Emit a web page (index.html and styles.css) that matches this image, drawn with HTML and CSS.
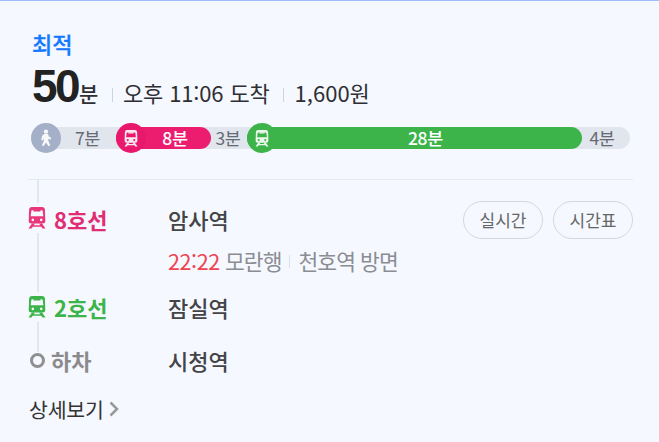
FILE: index.html
```
<!DOCTYPE html>
<html lang="ko">
<head>
<meta charset="utf-8">
<title>길찾기</title>
<link rel="stylesheet" href="styles.css">
</head>
<body>
<svg width="0" height="0" class="defs">
  <symbol id="train" viewBox="0 0 18 22">
    <path fill-rule="evenodd" d="M4 0h10q2.700 0 2.900 2.500L17.300 14q0 2.500-2.800 2.500h-11Q.7 16.500.7 14l.4-11.500Q1.300 0 4 0zM4.300 3.300q-.9 0-1 .8L2.700 9.300h12.600l-.6-5.200q-.1-.8-1-.8zM4.800 11.600a1.300 1.300 0 1 0 .01 0zM13.200 11.600a1.300 1.300 0 1 0 .01 0z"/>
    <path d="M5.500 3h7v1.600h-7zM4 16.500h3L3.500 21.500H.5zM11 16.500h3l3.500 5h-3zM3.500 18.200h11v1.500h-11z"/>
  </symbol>
</svg>
<main class="route">
  <div class="tag">최적</div>
  <div class="summary">
    <strong class="total">50</strong><span class="unit">분</span>
    <i class="sep"></i><span class="arrive">오후 11:06 도착</span>
    <i class="sep"></i><span class="fare">1,600원</span>
  </div>
  <div class="bar">
    <div class="seg walk first"><span class="dot"><svg width="12" height="18" viewBox="0 0 12 18"><circle cx="6" cy="2.600" r="2.200"/><path d="M4 5h4l1 2.500 2.300 1.500-.6 1.500-2.200-.8-.2 2 2 4.600-1.800.9L6 13.500l-2.500 3.700-1.700-1L3.800 12V9.300L3 11.200H1.200L2 7z"/></svg></span><b>7분</b></div>
    <div class="seg pink"><span class="dot"><svg width="14" height="17"><use href="#train"/></svg></span><b>8분</b></div>
    <div class="seg walk mid"><b>3분</b></div>
    <div class="seg green"><span class="dot"><svg width="14" height="17"><use href="#train"/></svg></span><b>28분</b></div>
    <div class="seg walk last"><b>4분</b></div>
  </div>
  <div class="steps">
    <div class="rail r1"></div>
    <div class="step line8"><svg class="ico" width="18" height="22"><use href="#train"/></svg><span class="name">8호선</span><span class="station">암사역</span><button>실시간</button><button>시간표</button></div>
    <div class="rail r2"><p class="info"><em>22:22</em><span class="dest">모란행</span><i></i><span class="via">천호역 방면</span></p></div>
    <div class="step line2"><svg class="ico" width="18" height="22"><use href="#train"/></svg><span class="name">2호선</span><span class="station">잠실역</span></div>
    <div class="rail r3"></div>
    <div class="step off"><span class="ring"></span><span class="name">하차</span><span class="station">시청역</span></div>
  </div>
  <a class="more">상세보기<svg width="10" height="16" viewBox="0 0 10 16"><path d="M1.500 1.500 8 8l-6.500 6.500"/></svg></a>
</main>
</body>
</html>
```
FILE: styles.css
```
* { box-sizing: border-box; }
body {
  margin: 0;
  background: #f5f8ff;
  color: #2f2f33;
  font-family: "Noto Sans CJK KR", sans-serif;
  font-size: 22px;
}
.defs { display: block; height: 0; }
.route {
  height: 442px;
  border-top: 1px solid #9dbefb;
  padding: 30px 26px 0 28px;
  white-space: nowrap;
}
.tag {
  padding-left: 4px;
  height: 25px;
  line-height: 25px;
  font-weight: 500;
  color: #1479ff;
  -webkit-text-stroke: 0.3px #1479ff;
}
.summary {
  display: flex;
  align-items: baseline;
  height: 60px;
  line-height: 60px;
  padding-left: 4px;
}
.total {
  width: 47px;
  font-family: "Liberation Sans", sans-serif;
  font-size: 46px;
  letter-spacing: -2.7px;
  color: #222;
}
.unit { width: 20px; font-size: 21px; font-weight: 500; }
.arrive { letter-spacing: -0.15px; }
.sep { width: 1px; height: 14px; background: #cfd3dc; margin: 0 10px 0 13px; }
.arrive + .sep { margin: 0 11px 0 13px; }
.bar {
  display: flex;
  width: 599px;
  height: 22px;
  margin: 11px 0 30px 3px;
  border-radius: 11px;
  background: #e1e5ee;
  font-size: 17.5px;
  letter-spacing: -0.3px;
}
.seg { display: flex; align-items: center; height: 22px; }
.seg b { flex: 1; text-align: center; line-height: 22px; font-weight: 500; color: #fff; }
.walk b { font-weight: 400; color: #666a72; }
.dot {
  display: flex;
  align-items: center;
  justify-content: center;
  width: 30px;
  height: 30px;
  border-radius: 50%;
}
.dot svg { fill: #fff; opacity: .9; }
.first { width: 85px; }
.first .dot { background: #a3b0c7; }
.first b { padding-right: 2px; }
.pink { width: 95px; background: #ec1c6f; border-radius: 11px; }
.pink .dot { background: #e9186c; }
.pink b { padding-right: 7px; }
.mid { width: 36px; }
.mid b { padding-right: 2px; }
.green { width: 335px; background: #3cb44a; border-radius: 11px; }
.green .dot { background: #3cb44a; }
.green b { padding-right: 8px; }
.last { width: 48px; }
.last b { padding-right: 8px; }
.steps { border-top: 1px solid #e3e8f3; }
.rail { margin-left: 9px; border-left: 2px solid #e1e6f0; }
.r1 { height: 23px; }
.r2 { height: 59px; }
.r3 { height: 30px; }
.step { display: flex; align-items: center; height: 30px; }
.ico { flex: none; margin-right: 8px; }
.name { width: 114px; font-weight: 700; padding-top: 2px; }
.line8 { color: #e02d73; fill: #e8377d; }
.line2 { color: #3cb44a; fill: #3cb44a; }
.off { color: #8b8b8e; margin-top: -7px; }
.station { flex: 1; color: #444448; font-weight: 500; padding: 2px 0 0; }
.line2 .name, .line2 .station { padding-top: 0; }
.step button {
  width: 80px;
  height: 38px;
  margin: 4px 0 0 10px;
  padding: 0 0 2px;
  border: 1px solid #d3d7e1;
  border-radius: 19px;
  background: transparent;
  color: #666;
  font: 400 17px "Noto Sans CJK KR", sans-serif;
}
.ring { width: 15px; height: 15px; margin: 0 7px 0 2px; border: 3px solid #909090; border-radius: 50%; }
.off .name { width: 116px; padding-top: 0; margin-left: -1px; }
.off .station { padding: 0 0 0 1px; }
.info { display: flex; align-items: center; margin: 0; padding: 10px 0 0 129px; line-height: 36px; font-size: 21.5px; letter-spacing: -0.95px; color: #8b8d93; }
.info em { width: 57px; font-style: normal; letter-spacing: -0.4px; color: #f04452; }
.info i { width: 1px; height: 13px; background: #dce0ea; margin: 0 9px 0 7px; }
.more { display: flex; align-items: center; height: 30px; margin: 19px 0 0 1px; font-size: 20.5px; letter-spacing: -0.2px; color: #333; }
.more svg { fill: none; stroke: #999; stroke-width: 2.5; margin-left: 5px; }
```
